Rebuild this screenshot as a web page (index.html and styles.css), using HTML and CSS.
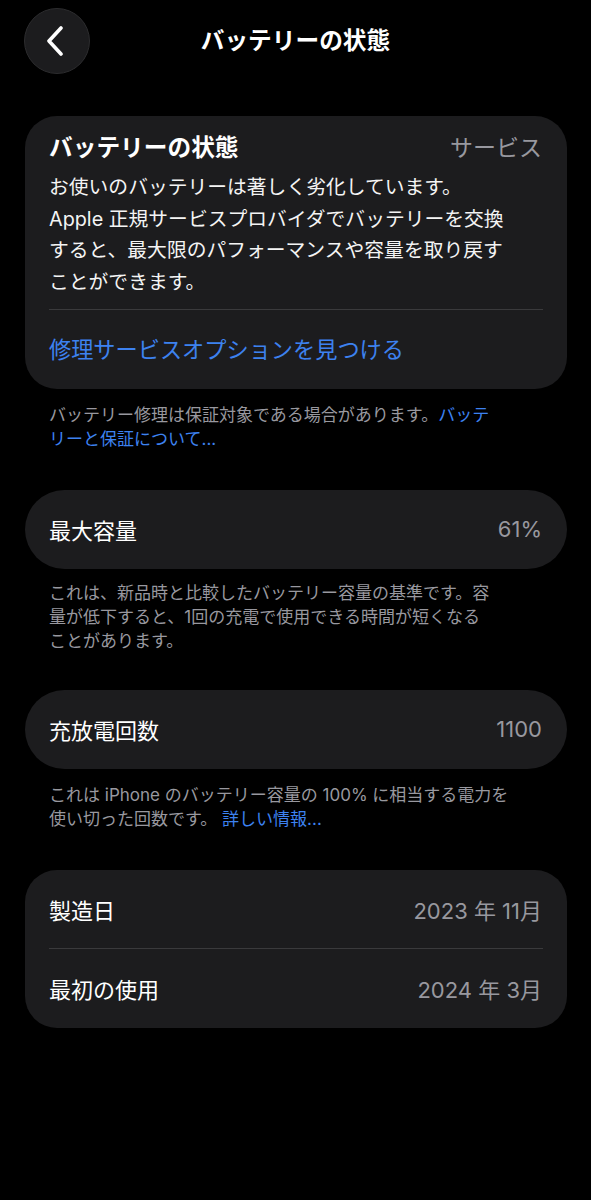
FILE: index.html
```html
<!DOCTYPE html>
<html lang="ja">
<head>
  <meta charset="UTF-8" />
  <meta name="viewport" content="width=device-width, initial-scale=1.0" />
  <title>バッテリーの状態</title>
  <link rel="stylesheet" href="styles.css">
</head>
<body>
  <header class="nav">
    <button class="back" aria-label="戻る">
      <svg width="20" height="30" viewBox="0 0 20 30">
        <path d="M16 2 L4 15 L16 28" fill="none" stroke="#fff" stroke-width="3.6" stroke-linecap="round" stroke-linejoin="round"/>
      </svg>
    </button>
    <h1 class="nav-title">バッテリーの状態</h1>
    <span></span>
  </header>

  <main class="content">
    <section class="card">
      <div class="health-head">
        <h2>バッテリーの状態</h2>
        <span class="value">サービス</span>
      </div>
      <p class="health-text">お使いのバッテリーは著しく劣化しています。<br>Apple 正規サービスプロバイダでバッテリーを交換<br>すると、最大限のパフォーマンスや容量を取り戻す<br>ことができます。</p>
      <div class="sep"></div>
      <a class="action" href="#">修理サービスオプションを見つける</a>
    </section>
    <p class="note">バッテリー修理は保証対象である場合があります。<a href="#">バッテ<br>リーと保証について...</a></p>

    <section class="card pill">
      <div class="row"><span>最大容量</span><span class="value">61%</span></div>
    </section>
    <p class="note short">これは、新品時と比較したバッテリー容量の基準です。容<br>量が低下すると、1回の充電で使用できる時間が短くなる<br>ことがあります。</p>

    <section class="card pill">
      <div class="row"><span>充放電回数</span><span class="value">1100</span></div>
    </section>
    <p class="note">これは iPhone のバッテリー容量の 100% に相当する電力を<br>使い切った回数です。 <a href="#">詳しい情報...</a></p>

    <section class="card">
      <div class="row"><span>製造日</span><span class="value">2023 年 11月</span></div>
      <div class="sep"></div>
      <div class="row"><span>最初の使用</span><span class="value">2024 年 3月</span></div>
    </section>
  </main>
</body>
</html>
```

FILE: styles.css
```css
/* 基本 */
body {
  margin: 0;
  background: #000;
  color: #fff;
  font-family: Inter, "Noto Sans CJK JP", sans-serif;
}
.nav {
  display: grid;
  grid-template-columns: 66px 1fr 66px;
  align-items: center;
  padding: 8px 24px 0;
}
.back {
  width: 66px;
  height: 66px;
  border-radius: 50%;
  background: #1c1c1e;
  border: 1px solid #2c2c2e;
  display: flex;
  align-items: center;
  justify-content: center;
  padding: 0 4px 0 0;
  cursor: pointer;
}
.nav-title {
  margin: 0;
  text-align: center;
  font-size: 23.7px;
  font-weight: 700;
  line-height: 30px;
}
.content {
  padding: 42px 24px 0 25px;
}
.card {
  background: #1c1c1e;
  border-radius: 32px;
}
.card.pill {
  border-radius: 40px;
}
.health-head {
  display: flex;
  justify-content: space-between;
  align-items: center;
  padding: 17px 25px 0 24px;
  line-height: 30px;
}
.health-head h2 {
  margin: 0;
  font-size: 23.7px;
  font-weight: 700;
}
.health-head .value {
  font-size: 23px;
}
.health-text {
  margin: 9px 0 10px;
  padding: 0 24px;
  font-size: 19.8px;
  line-height: 31.7px;
  color: #f4f4f4;
}
.sep {
  height: 1px;
  background: #3a3a3c;
  margin: 0 24px;
}
.action {
  display: block;
  padding: 25px 24px 24px;
  font-size: 22.2px;
  line-height: 30px;
  color: #3d82f0;
  text-decoration: none;
}
.value {
  color: #98989f;
}
.row {
  display: flex;
  justify-content: space-between;
  align-items: center;
  height: 78px;
  padding: 0 25px 0 24px;
  font-size: 22px;
}
.row + .sep + .row,
.pill .row {
  height: 79px;
}
.note {
  margin: 14px 0 39px;
  padding: 0 24px;
  font-size: 17px;
  line-height: 24px;
  color: #98989f;
}
.note.short {
  margin: 12px 0 37px;
}
.note a {
  color: #3d82f0;
  text-decoration: none;
}
```
